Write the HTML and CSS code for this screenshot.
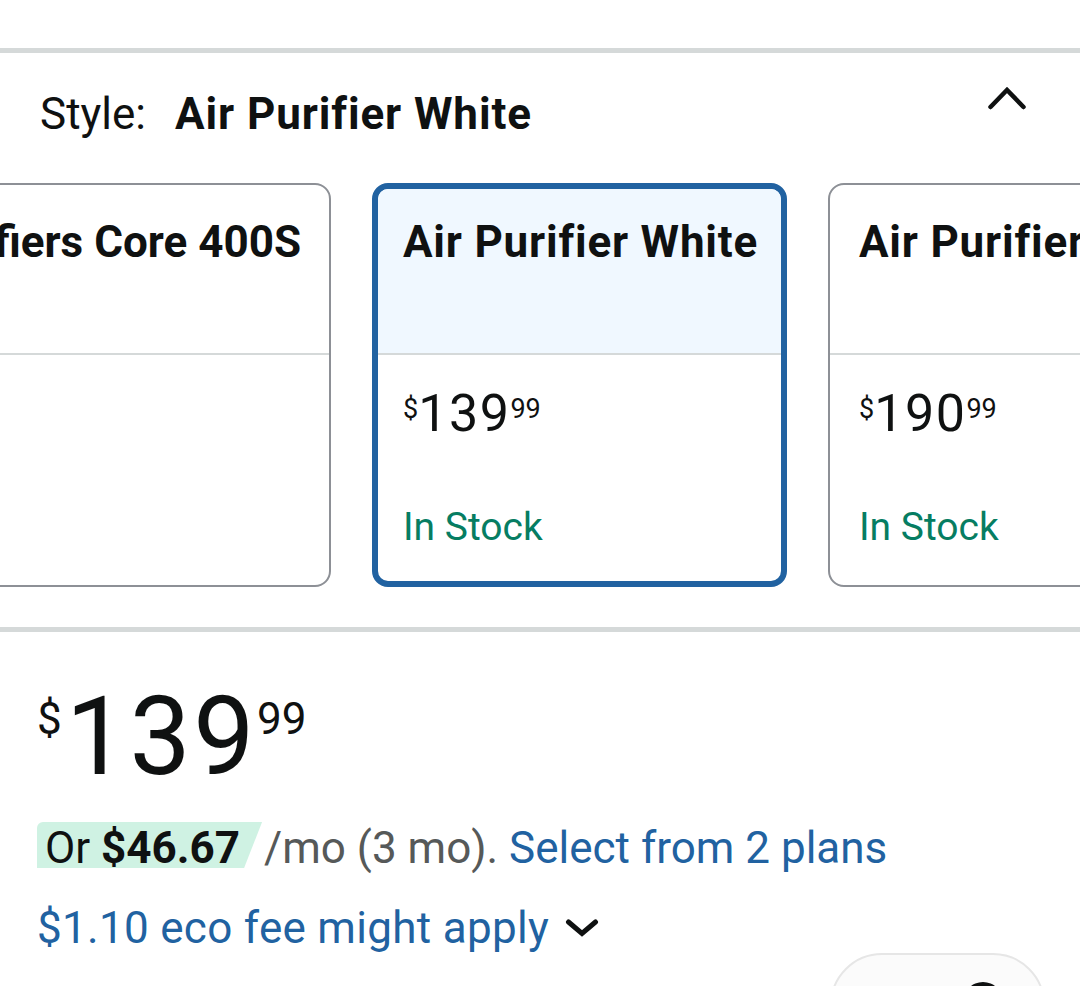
FILE: index.html
```html
<!DOCTYPE html>
<html lang="en">
<head>
<meta charset="utf-8">
<title>Style: Air Purifier White</title>
<link rel="stylesheet" href="styles.css">
</head>
<body>
<div class="page">
  <div class="top-gap"></div>
  <div class="rule"></div>

  <section class="variation">
    <div class="var-head">
      <div class="var-label"><span class="label">Style:</span><span class="value">Air Purifier White</span></div>
      <svg class="chev-up" width="40" height="26" viewBox="0 0 40 26" aria-hidden="true">
        <polyline points="3.5,22 20,5 36.5,22" fill="none" stroke="#0f1111" stroke-width="4.5" stroke-linecap="round" stroke-linejoin="miter"/>
      </svg>
    </div>

    <div class="cards">
      <div class="card card--first">
        <div class="card-head"><span class="card-title">Air Purifiers Core 400S</span></div>
        <div class="card-body"></div>
      </div>
      <div class="card card--selected">
        <div class="card-head"><span class="card-title">Air Purifier White</span></div>
        <div class="card-body">
          <div class="price-sm"><span class="sym">$</span><span class="whole">139</span><span class="frac">99</span></div>
          <div class="stock">In Stock</div>
        </div>
      </div>
      <div class="card card--last">
        <div class="card-head"><span class="card-title">Air Purifier Core 300S</span></div>
        <div class="card-body">
          <div class="price-sm"><span class="sym">$</span><span class="whole">190</span><span class="frac">99</span></div>
          <div class="stock">In Stock</div>
        </div>
      </div>
    </div>
  </section>

  <div class="rule rule--mid"></div>

  <section class="buybox">
    <div class="price-big"><span class="sym">$</span><span class="whole">139</span><span class="frac">99</span></div>
    <p class="installment"><span class="promo">Or <b>$46.67</b></span><span class="muted">/mo (3 mo).</span> <a class="link" href="#">Select from 2 plans</a></p>
    <p class="eco"><a class="link eco-link" href="#">$1.10 eco fee might apply</a><svg class="chev-down" width="34" height="20" viewBox="0 0 34 20" aria-hidden="true"><polyline points="3.5,4 17,15.5 30.5,4" fill="none" stroke="#0f1111" stroke-width="5" stroke-linecap="round" stroke-linejoin="miter"/></svg></p>
    <div class="actions"><div class="pill"><span class="pill-icon"></span></div></div>
  </section>
</div>
</body>
</html>
```

FILE: styles.css
```css
html, body {
  margin: 0;
  padding: 0;
  background: #ffffff;
}

body {
  width: 1080px;
  height: 986px;
  overflow: hidden;
  font-family: Roboto, "Liberation Sans", sans-serif;
  color: #0f1111;
}

.page {
  width: 1080px;
}

.top-gap {
  height: 48px;
}

.rule {
  height: 5px;
  background: #d5d9d9;
}

.rule--mid {
  margin-top: 40px;
}

/* Variation selector */
.variation {
  padding-top: 35px;
}

.var-head {
  display: flex;
  justify-content: space-between;
  align-items: flex-start;
  padding-left: 40px;
  padding-right: 53px;
}

.var-label {
  font-size: 44px;
  line-height: 52px;
  white-space: nowrap;
}

.label {
  margin-right: 29px;
}

.value {
  font-weight: 700;
  letter-spacing: 0.9px;
}

.chev-up {
  display: block;
  margin-top: -3px;
}

.cards {
  display: flex;
  gap: 41px;
  margin-top: 43px;
  margin-left: -84px;
  width: max-content;
}

.card {
  box-sizing: border-box;
  width: 415px;
  height: 404px;
  border: 2px solid #8d9096;
  border-radius: 16px;
  overflow: hidden;
  display: flex;
  flex-direction: column;
  background: #ffffff;
}

.card-head {
  box-sizing: border-box;
  height: 170px;
  padding: 31px 29px 0;
  border-bottom: 2px solid #d5d9d9;
  display: flex;
  align-items: flex-start;
}

.card--first .card-head {
  justify-content: flex-end;
  padding-right: 28px;
}

.card-title {
  font-size: 44px;
  line-height: 52px;
  font-weight: 700;
  letter-spacing: 0.8px;
  white-space: nowrap;
}

.card--first .card-title {
  letter-spacing: 0;
}

.card-body {
  flex: 1;
  padding: 33px 29px 0;
}

.card--selected {
  border: 6px solid #2162a1;
}

.card--selected .card-head {
  height: 166px;
  padding: 27px 25px 0;
  background: #f0f8ff;
}

.card--selected .card-body {
  padding: 33px 25px 0;
}

.price-sm {
  display: flex;
  align-items: flex-start;
  line-height: 1;
}

.price-sm .sym {
  font-size: 27px;
  margin-top: 8px;
}

.price-sm .whole {
  font-size: 52px;
  letter-spacing: 1.5px;
}

.price-sm .frac {
  font-size: 27px;
  margin-top: 8px;
  margin-left: 0;
}

.stock {
  margin-top: 68px;
  font-size: 39px;
  line-height: 1;
  color: #067d62;
}

/* Buy box */
.buybox {
  padding: 51px 0 0 37px;
}

.price-big {
  display: flex;
  align-items: flex-start;
  line-height: 1;
}

.price-big .sym {
  font-size: 44px;
  margin-top: 14px;
  margin-right: 4px;
}

.price-big .whole {
  font-size: 109px;
  letter-spacing: 2.5px;
}

.price-big .frac {
  font-size: 44px;
  margin-top: 14px;
  margin-left: 0;
}

.installment,
.eco {
  margin: 0;
  font-size: 44px;
  line-height: 52px;
  white-space: nowrap;
}

.installment {
  margin-top: 30px;
}

.promo {
  display: inline-block;
  height: 46px;
  line-height: 52px;
  padding: 0 22px 0 8px;
  background: #cff2e3;
  border-top-left-radius: 6px;
  clip-path: polygon(0 0, 100% 0, calc(100% - 18px) 100%, 0 100%);
}

.promo b {
  font-weight: 700;
}

.muted {
  color: #565959;
  margin-left: 2px;
}

.link {
  color: #2162a1;
  text-decoration: none;
}

.eco {
  margin-top: 28px;
  display: flex;
  align-items: center;
}

.eco-link {
  letter-spacing: 0.3px;
}

.chev-down {
  display: block;
  margin-left: 16px;
  margin-top: 0;
}

.actions {
  display: flex;
  padding-left: 793px;
  margin-top: -1px;
}

.pill {
  box-sizing: border-box;
  width: 215px;
  height: 120px;
  border: 2px solid #e6e6e6;
  border-radius: 52px;
  background: #fbfbfb;
  padding: 27px 0 0 131px;
}

.pill-icon {
  display: block;
  width: 40px;
  height: 40px;
  border-radius: 50%;
  background: #0f1111;
}
```
